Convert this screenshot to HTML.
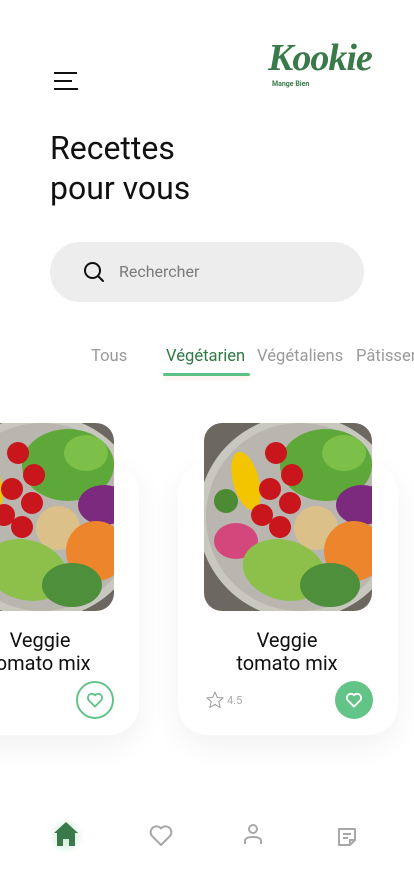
<!DOCTYPE html>
<html><head><meta charset="utf-8"><style>
*{margin:0;padding:0;box-sizing:border-box}
html,body{width:414px;height:896px;overflow:hidden}
body{background:#fff;position:relative;font-family:"Roboto","Liberation Sans",sans-serif}
.wrap{position:absolute;left:0;top:0;width:414px;height:896px;overflow:hidden}
.abs{position:absolute}
.ham div{position:absolute;height:2px;background:#111;left:0}
.title{left:50px;top:128px;font-size:32px;line-height:40px;color:#111}
.search{left:50px;top:242px;width:314px;height:60px;border-radius:30px;background:#ededed}
.tab{top:347px;font-size:16.6px;color:#9a9a9a;white-space:nowrap}
.card{background:#fff;border-radius:30px;box-shadow:0 10px 30px rgba(0,0,0,0.06)}
.img{border-radius:18px;overflow:hidden;width:168px;height:188px}
.name{font-size:20px;line-height:23px;color:#111;text-align:center}
</style></head><body><div class="wrap">
<svg width="0" height="0" style="position:absolute"><defs>
<symbol id="food" viewBox="0 0 168 188">
<rect width="168" height="188" fill="#6d6761"/>
<circle cx="96" cy="94" r="102" fill="#c9c8c0"/>
<circle cx="96" cy="94" r="94" fill="#b8b6ae"/>
<ellipse cx="122" cy="42" rx="46" ry="36" fill="#5ea83a"/>
<ellipse cx="140" cy="30" rx="22" ry="18" fill="#7cc04a"/>
<ellipse cx="42" cy="58" rx="13" ry="30" fill="#f2c500" transform="rotate(-15 42 58)"/>
<ellipse cx="22" cy="78" rx="12" ry="12" fill="#4c8a34"/>
<ellipse cx="158" cy="82" rx="26" ry="20" fill="#7b2a7e"/>
<ellipse cx="112" cy="105" rx="22" ry="22" fill="#dcc08a"/>
<ellipse cx="150" cy="128" rx="30" ry="30" fill="#ec852c"/>
<ellipse cx="32" cy="118" rx="22" ry="18" fill="#d4477c"/>
<ellipse cx="80" cy="147" rx="42" ry="30" fill="#8cc04a" transform="rotate(15 80 147)"/>
<ellipse cx="126" cy="162" rx="30" ry="22" fill="#4d8f3a"/>
<g fill="#c8161c"><circle cx="72" cy="30" r="11"/><circle cx="88" cy="52" r="11"/><circle cx="66" cy="66" r="11"/><circle cx="86" cy="80" r="11"/><circle cx="58" cy="92" r="11"/><circle cx="76" cy="104" r="11"/></g>
</symbol></defs></svg>

<div class="abs ham" style="left:54px;top:72px;width:26px;height:20px">
<div style="top:0;width:23px"></div><div style="top:8px;width:18px"></div><div style="top:16px;width:24px"></div></div>

<div class="abs" style="left:268px;top:36px;font-family:'Liberation Serif',serif;font-style:italic;font-weight:bold;font-size:38px;color:#3a7a4a;letter-spacing:-1px">Kookie</div>
<div class="abs" style="left:272px;top:80px;font-size:7px;font-weight:bold;color:#3a7a4a">Mange Bien</div>

<div class="abs title">Recettes<br>pour vous</div>

<div class="abs search">
<svg class="abs" style="left:33px;top:19px" width="22" height="22" viewBox="0 0 22 22"><circle cx="9.5" cy="9.5" r="7.5" fill="none" stroke="#111" stroke-width="2"/><line x1="15" y1="15" x2="20" y2="20" stroke="#111" stroke-width="2" stroke-linecap="round"/></svg>
<div class="abs" style="left:69px;top:20px;font-size:16px;color:#7a7a7a">Rechercher</div>
</div>

<div class="abs tab" style="left:91px">Tous</div>
<div class="abs tab" style="left:166px;color:#2f7a44">Végétarien</div>
<div class="abs tab" style="left:257px">Végétaliens</div>
<div class="abs" style="left:356px;top:347px;width:58px;overflow:hidden;white-space:nowrap;font-size:16.6px;color:#9a9a9a">Pâtisserie</div>
<div class="abs" style="left:163px;top:373px;width:87px;height:3px;border-radius:2px;background:#5bc184;box-shadow:0 3px 5px rgba(240,180,150,0.25)"></div>

<div class="abs card" style="left:-80px;top:463px;width:219px;height:272px"></div>
<div class="abs img" style="left:-54px;top:423px"><svg width="168" height="188"><use href="#food"/></svg></div>
<div class="abs name" style="left:-50px;top:629px;width:180px">Veggie<br>tomato mix</div>
<div class="abs" style="left:76px;top:681px;width:38px;height:38px;border-radius:50%;border:2px solid #63c487"></div>
<svg class="abs" style="left:86px;top:692px" width="18" height="16" viewBox="0 0 24 22"><path d="M12 20 L3.5 11.5 A5 5 0 0 1 12 4.5 A5 5 0 0 1 20.5 11.5 Z" fill="none" stroke="#63c487" stroke-width="2.5" stroke-linejoin="round"/></svg>

<div class="abs card" style="left:178px;top:463px;width:220px;height:272px"></div>
<div class="abs img" style="left:204px;top:423px"><svg width="168" height="188"><use href="#food"/></svg></div>
<div class="abs name" style="left:197px;top:629px;width:180px">Veggie<br>tomato mix</div>
<svg class="abs" style="left:205px;top:690px" width="20" height="20" viewBox="0 0 24 24"><path d="M12 2.5 L14.8 9 L21.8 9.5 L16.5 14 L18.2 21 L12 17.3 L5.8 21 L7.5 14 L2.2 9.5 L9.2 9 Z" fill="none" stroke="#9a9a9a" stroke-width="1.2" stroke-linejoin="round"/></svg>
<div class="abs" style="left:227px;top:694px;font-size:11px;color:#aaa">4.5</div>
<div class="abs" style="left:335px;top:681px;width:38px;height:38px;border-radius:50%;background:#63c487"></div>
<svg class="abs" style="left:345px;top:692px" width="18" height="16" viewBox="0 0 24 22"><path d="M12 20 L3.5 11.5 A5 5 0 0 1 12 4.5 A5 5 0 0 1 20.5 11.5 Z" fill="none" stroke="#fff" stroke-width="2.5" stroke-linejoin="round"/></svg>

<div class="abs" style="left:48px;top:818px;width:36px;height:36px;border-radius:50%;background:radial-gradient(circle,rgba(90,200,120,0.35),rgba(90,200,120,0) 70%)"></div>
<svg class="abs" style="left:53px;top:821px" width="26" height="26" viewBox="0 0 26 26"><path d="M13 1 L25 12 L22 12 L22 25 L16 25 L16 18 L10 18 L10 25 L4 25 L4 12 L1 12 Z" fill="#3a7a4a"/></svg>
<svg class="abs" style="left:149px;top:825px" width="24" height="22" viewBox="0 0 24 22"><path d="M12 20 L3 11 A5 5 0 0 1 12 3.5 A5 5 0 0 1 21 11 Z" fill="none" stroke="#a8a8a8" stroke-width="2" stroke-linejoin="round"/></svg>
<svg class="abs" style="left:243px;top:823px" width="20" height="22" viewBox="0 0 20 22"><circle cx="10" cy="6" r="4" fill="none" stroke="#a8a8a8" stroke-width="2"/><path d="M2 21 L2 18 Q2 14 10 14 Q18 14 18 18 L18 21" fill="none" stroke="#a8a8a8" stroke-width="2"/></svg>
<svg class="abs" style="left:337px;top:827px" width="20" height="20" viewBox="0 0 20 20"><path d="M2 2 L18 2 L18 13 L13 18 L2 18 Z" fill="none" stroke="#a8a8a8" stroke-width="2" stroke-linejoin="round"/><path d="M6 7 H14 M6 11 H11" stroke="#a8a8a8" stroke-width="2"/><path d="M13 18 L13 13 L18 13" fill="none" stroke="#a8a8a8" stroke-width="2"/></svg>
</div></body></html>
